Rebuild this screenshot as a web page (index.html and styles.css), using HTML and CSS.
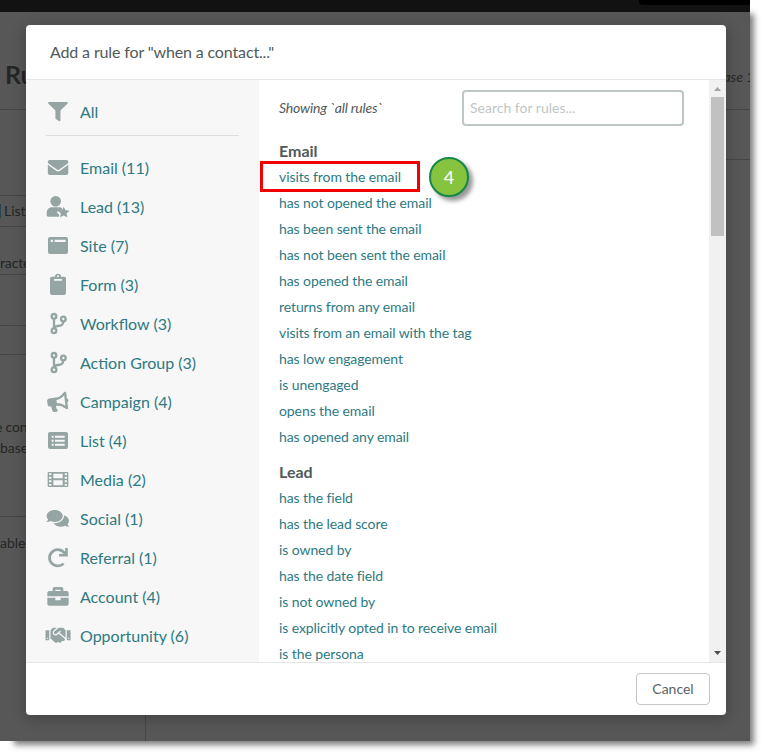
FILE: index.html
```html
<!DOCTYPE html>
<html lang="en">
<head>
<meta charset="utf-8">
<title>Add a rule</title>
<link rel="stylesheet" href="styles.css">
</head>
<body>
<div class="app">
  <div class="topbar"><div class="topbar-tab"></div></div>
  <div class="page">
    <div class="page-head"><h1>Rules</h1><span class="note">base 1</span></div>
    <div class="page-body">
      <div class="page-left">
        <div class="cell c1"></div>
        <div class="cell c2"><i class="tick"></i>List</div>
        <div class="cell c3">racters</div>
        <div class="cell c4"></div>
        <div class="cell c5"></div>
        <div class="cell c6"><div class="lead-line">e con</div><div>base</div></div>
        <div class="cell c7">able</div>
      </div>
      <div class="page-right"></div>
    </div>
    <div class="page-foot"></div>
  </div>
  <section class="modal">
    <header class="modal-head">Add a rule for "when a contact..."</header>
    <div class="modal-body">
      <nav class="side">
        <a class="item all"><svg viewBox="0 0 78 78"><path transform="translate(9 9) scale(.1165 .113)" d="M487.976 0H24.028C2.71 0-8.047 25.866 7.058 40.971L192 225.941V432c0 7.831 3.821 15.17 10.237 19.662l80 55.98C298.02 518.69 320 507.493 320 487.98V225.941l184.947-184.97C520.021 25.896 509.338 0 487.976 0z"/></svg>All</a>
        <a class="item"><svg viewBox="0 0 78 78"><path transform="translate(8.500 7.500) scale(.12 .117)" d="M502.300 190.800c3.900-3.100 9.700-.2 9.700 4.700V400c0 26.500-21.500 48-48 48H48c-26.500 0-48-21.500-48-48V195.600c0-5 5.700-7.800 9.700-4.700 22.400 17.400 52.100 39.500 154.100 113.600 21.100 15.400 56.700 47.800 92.200 47.600 35.700.3 72-32.800 92.300-47.600 102-74.100 131.600-96.300 154-113.700zM256 320c23.200.4 56.600-29.200 73.400-41.400 132.700-96.300 142.800-104.700 173.400-128.700 5.800-4.500 9.200-11.500 9.200-18.900v-19c0-26.500-21.500-48-48-48H48c-26.500 0-48 21.500-48 48v19c0 7.400 3.400 14.300 9.200 18.900 30.600 23.900 40.700 32.400 173.400 128.700 16.800 12.200 50.200 41.800 73.400 41.400z"/></svg>Email (11)</a>
        <a class="item"><svg viewBox="0 0 78 78"><circle cx="32" cy="22" r="16"/><path d="M21 40h22c4 0 7 2 9 5l-3 5-10 2c-4 1-3 4-1 6l5 5-1 5H10c-3 0-5-2-5-5v-6c0-10 7-17 16-17z"/><path d="m56 38 5.500 10.500 12 1.500-9 8.500 2.500 11.500-11-5.500-10.500 5.500 2-11.500-8.500-8.500 12-1.500z"/></svg>Lead (13)</a>
        <a class="item"><svg viewBox="0 0 78 78"><path fill-rule="evenodd" d="M15 12h48a6 6 0 0 1 6 6v39a6 6 0 0 1-6 6H15a6 6 0 0 1-6-6V18a6 6 0 0 1 6-6zm2 8v7h7v-7zm12 0v7h33v-7z"/></svg>Site (7)</a>
        <a class="item"><svg viewBox="0 0 78 78"><path fill-rule="evenodd" d="M21 14h9a9 9 0 0 1 18 0h9a6 6 0 0 1 6 6v43a6 6 0 0 1-6 6H21a6 6 0 0 1-6-6V20a6 6 0 0 1 6-6zm18-4a3 3 0 1 0 0 6 3 3 0 0 0 0-6zM27 21v5h24v-5z"/></svg>Form (3)</a>
        <a class="item"><svg viewBox="0 0 78 78"><g class="line"><circle cx="27" cy="16" r="7"/><circle cx="27" cy="59" r="7"/><circle cx="55" cy="24" r="7"/><path d="M27 23v29M55 31c0 12-7 13-17 14-6 1-9 2-11 5"/></g></svg>Workflow (3)</a>
        <a class="item"><svg viewBox="0 0 78 78"><g class="line"><circle cx="27" cy="16" r="7"/><circle cx="27" cy="59" r="7"/><circle cx="55" cy="24" r="7"/><path d="M27 23v29M55 31c0 12-7 13-17 14-6 1-9 2-11 5"/></g></svg>Action Group (3)</a>
        <a class="item"><svg viewBox="0 0 78 78"><path transform="rotate(-7 39 39) translate(7 11) scale(.11)" d="M576 240c0-23.630-12.950-44.040-32-55.120V32.010C544 23.260 537.020 0 512 0c-7.120 0-14.190 2.380-19.980 7.020l-85.030 68.030C364.280 109.190 310.660 128 256 128H64c-35.350 0-64 28.650-64 64v96c0 35.350 28.650 64 64 64h33.700c-1.390 10.480-2.180 21.140-2.180 32 0 39.770 9.260 77.350 25.560 110.940 5.190 10.690 16.520 17.060 28.400 17.060h74.280c26.050 0 41.690-29.840 25.900-50.560-16.400-21.520-26.150-48.360-26.150-77.440 0-11.110 1.620-21.790 4.410-32H256c54.660 0 108.280 18.810 150.980 52.950l85.030 68.030a32.023 32.023 0 0 0 19.980 7.020c24.920 0 32-22.780 32-32V295.130C563.050 284.040 576 263.630 576 240zm-96 141.420l-33.050-26.440C392.950 311.780 325.120 288 256 288v-96c69.120 0 136.950-23.780 190.950-66.980L480 98.580v282.840z"/></svg>Campaign (4)</a>
        <a class="item"><svg viewBox="0 0 78 78"><path fill-rule="evenodd" d="M15 12h48a6 6 0 0 1 6 6v39a6 6 0 0 1-6 6H15a6 6 0 0 1-6-6V18a6 6 0 0 1 6-6zm5 11v6h6v-6zm10 0v6h29v-6zM20 35v6h6v-6zm10 0v6h29v-6zM20 47v6h6v-6zm10 0v6h29v-6z"/></svg>List (4)</a>
        <a class="item"><svg viewBox="0 0 78 78"><path fill-rule="evenodd" d="M11 15h56a3 3 0 0 1 3 3v39a3 3 0 0 1-3 3H11a3 3 0 0 1-3-3V18a3 3 0 0 1 3-3zm1 4v5h7v-5zm0 10v6h7v-6zm0 11v6h7v-6zm0 11v5h7v-5zm47-32v5h7v-5zm0 10v6h7v-6zm0 11v6h7v-6zm0 11v5h7v-5zM25 20v14h28V20zm0 20v15h28V40z"/></svg>Media (2)</a>
        <a class="item"><svg viewBox="0 0 78 78"><path transform="translate(5 8.500) scale(.116 .112)" d="M416 192c0-88.400-93.100-160-208-160S0 103.600 0 192c0 34.300 14.100 65.900 38 92-13.400 30.200-35.500 54.200-35.800 54.500-2.200 2.300-2.800 5.700-1.500 8.700S4.800 352 8 352c36.600 0 66.900-12.300 88.700-25 32.200 15.700 70.300 25 111.300 25 114.900 0 208-71.600 208-160zm122 220c23.900-26 38-57.700 38-92 0-66.900-53.500-124.200-129.300-148.100.9 6.600 1.300 13.300 1.300 20.100 0 105.900-107.700 192-240 192-10.800 0-21.300-.8-31.700-1.900C207.800 439.600 281.800 480 368 480c41 0 79.100-9.200 111.300-25 21.800 12.700 52.100 25 88.700 25 3.200 0 6.100-1.900 7.300-4.800 1.300-2.900.7-6.300-1.500-8.700-.3-.3-22.400-24.200-35.800-54.500z"/></svg>Social (1)</a>
        <a class="item"><svg viewBox="0 0 78 78"><path transform="translate(8.500 9) scale(.117 .115)" d="M500.330 0h-47.410a12 12 0 0 0-12 12.570l4 82.760A247.420 247.420 0 0 0 256 8C119.340 8 7.900 119.530 8 256.190 8.100 393.070 119.100 504 256 504a247.100 247.100 0 0 0 166.180-63.910 12 12 0 0 0 .48-17.430l-34-34a12 12 0 0 0-16.380-.55A176 176 0 1 1 402.100 157.800l-101.530-4.870a12 12 0 0 0-12.570 12v47.410a12 12 0 0 0 12 12h200.330a12 12 0 0 0 12-12V12a12 12 0 0 0-12-12z"/></svg>Referral (1)</a>
        <a class="item"><svg viewBox="0 0 78 78"><path transform="translate(7 5) scale(.125)" d="M320 336c0 8.840-7.160 16-16 16h-96c-8.840 0-16-7.160-16-16v-48H0v144c0 25.600 22.400 48 48 48h416c25.600 0 48-22.400 48-48V288H320v48zm144-208h-80V80c0-25.600-22.400-48-48-48H176c-25.600 0-48 22.400-48 48v48H48c-25.600 0-48 22.400-48 48v80h512v-80c0-25.600-22.400-48-48-48zm-144 0H192V96h128v32z"/></svg>Account (4)</a>
        <a class="item"><svg viewBox="0 0 78 78"><path transform="translate(1.500 6.500) scale(.1175)" d="M434.700 64h-85.900c-8 0-15.700 3-21.600 8.400l-98.300 90c-.1.1-.2.3-.3.4-16.600 15.600-16.300 40.500-2.100 56 12.700 13.900 39.400 17.600 56.100 2.700.1-.1.3-.1.4-.2l79.900-73.200c6.500-5.900 16.700-5.500 22.600 1 6 6.500 5.500 16.600-1 22.600l-26.100 23.900L504 313.800c2.900 2.400 5.500 5 7.900 7.700V128l-54.600-54.600c-5.900-6-14.100-9.400-22.600-9.400zM544 128.200v223.900c0 17.700 14.300 32 32 32h64V128.200h-96zm48 223.900c-8.800 0-16-7.200-16-16s7.200-16 16-16 16 7.200 16 16-7.200 16-16 16zM0 384h64c17.700 0 32-14.300 32-32V128.200H0V384zm48-63.900c8.800 0 16 7.200 16 16s-7.200 16-16 16-16-7.200-16-16c0-8.900 7.200-16 16-16zm435.900 18.600L334.600 217.500l-30 27.500c-29.700 27.100-75.200 24.500-101.700-4.400-26.900-29.400-24.800-74.900 4.400-101.700L289.100 64h-83.800c-8.500 0-16.600 3.400-22.600 9.400L128 128v223.900h18.300l90.500 81.900c27.400 22.300 67.700 18.100 90-9.300l.2-.2 17.900 15.500c15.900 13 39.400 10.500 52.300-5.400l31.400-38.600 5.400 4.400c13.700 11.100 33.900 9.100 45-4.700l9.500-11.700c11.200-13.800 9.100-33.900-4.600-45.100z"/></svg>Opportunity (6)</a>
      </nav>
      <div class="rules">
        <div class="search-row"><em>Showing `all rules`</em><input class="search" type="text" placeholder="Search for rules..."></div>
        <h2>Email</h2>
        <a class="marked">visits from the email<span class="frame"></span><span class="badge">4</span></a>
        <a>has not opened the email</a>
        <a>has been sent the email</a>
        <a>has not been sent the email</a>
        <a>has opened the email</a>
        <a>returns from any email</a>
        <a>visits from an email with the tag</a>
        <a>has low engagement</a>
        <a>is unengaged</a>
        <a>opens the email</a>
        <a>has opened any email</a>
        <h2 class="second">Lead</h2>
        <a>has the field</a>
        <a>has the lead score</a>
        <a>is owned by</a>
        <a>has the date field</a>
        <a>is not owned by</a>
        <a>is explicitly opted in to receive email</a>
        <a>is the persona</a>
      </div>
      <div class="scroll">
        <svg viewBox="0 0 17 17"><path fill="#a3a3a3" d="M5 11h7L8.500 7z"/></svg>
        <div class="thumb"></div>
        <svg viewBox="0 0 17 17"><path fill="#505050" d="M5 6h7l-3.500 4z"/></svg>
      </div>
    </div>
    <footer class="modal-foot"><button>Cancel</button></footer>
  </section>
</div>
</body>
</html>
```

FILE: styles.css
```css
* { box-sizing: border-box; }
body { margin: 0; height: 756px; overflow: hidden; background: #fff; font-family: Lato, "Liberation Sans", sans-serif; font-size: 14px; color: #515959; }
.app { position: relative; width: 750px; height: 741px; background: #575757; }
.app::before { content: ""; position: absolute; z-index: -1; inset: 12px 0 0 12px; box-shadow: 3px 3px 6px 1px rgba(0,0,0,.5); }
.topbar { height: 12px; background: #121212; display: flex; justify-content: flex-end; }
.topbar-tab { width: 111px; height: 5px; background: #000; border-bottom-left-radius: 4px; }
.page { height: 729px; overflow: hidden; display: flex; flex-direction: column; color: #242626; }
.page-head { height: 98px; border-bottom: 1px solid #464646; display: flex; justify-content: space-between; padding: 48px 0 0 5px; }
.page-head h1 { margin: 0; font-size: 25px; line-height: 29px; }
.note { width: 37px; margin-top: 8px; font-style: italic; line-height: 17px; white-space: nowrap; text-indent: 3px; overflow: hidden; }
.page-body { height: 605px; display: flex; justify-content: space-between; line-height: 20px; }
.page-left { width: 145px; }
.page-right { width: 100px; height: 50px; border-bottom: 1px solid #464646; }
.page-foot { flex: 1; width: 146px; border-right: 1px solid #464646; }
.cell { border-bottom: 1px solid #464646; white-space: nowrap; }
.c1 { height: 86px; }
.c2 { height: 31px; padding: 5px 0 0 4px; display: flex; }
.tick { width: 1px; height: 14px; margin: 3px 3px 0 -4px; background: #29434f; }
.c3 { height: 48px; padding-top: 26px; letter-spacing: -.15px; }
.c4 { height: 51px; }
.c5 { height: 29px; }
.c6 { height: 162px; padding-top: 61px; line-height: 21px; }
.lead-line { margin-left: -5px; letter-spacing: -.2px; }
.c7 { height: 90px; padding-top: 16px; border: 0; }

.modal { position: absolute; left: 26px; top: 25px; width: 700px; height: 690px; display: flex; flex-direction: column; background: #fff; border-radius: 4px; box-shadow: 0 3px 14px rgba(0,0,0,.25); }
.modal-head { height: 55px; padding: 0 24px; border-bottom: 1px solid #e5e6e6; font-size: 16px; line-height: 54px; letter-spacing: -.14px; }
.modal-body { height: 582px; display: flex; overflow: hidden; }
.side { width: 233px; padding: 13px 20px; background: #f7f7f7; }
.item { display: flex; align-items: center; height: 39px; padding-bottom: 2px; gap: 9px; font-size: 16px; color: #2d7a82; margin-left: -1px; }
.item svg { width: 26px; height: 26px; margin-top: 1px; fill: #95a5a3; overflow: visible; }
.item.all { height: 43px; margin: 0 0 13px; padding-bottom: 6px; border-bottom: 1px solid #dcdede; gap: 8px; }
.item.all svg { margin: 2px 1px 0 -1px; }
.item .line { fill: none; stroke: #95a5a3; stroke-width: 7; }
.rules { width: 450px; padding: 10px 25px 0 20px; }
.search-row { display: flex; justify-content: space-between; align-items: center; }
.search-row em { padding-bottom: 2px; letter-spacing: -.2px; }
.search { width: 222px; height: 36px; padding: 0 6px 2px; border: 2px solid #bfc6c6; border-radius: 4px; font: 14px Lato, sans-serif; background: #fff; }
.search::placeholder { color: #bfc6c6; opacity: 1; }
h2 { margin: 15px 0 0; height: 23px; font-size: 16px; line-height: 20px; }
h2.second { margin-top: 12px; }
.rules a { display: block; position: relative; height: 26px; line-height: 26px; color: #2d7a82; white-space: nowrap; letter-spacing: -.09px; }
.frame { position: absolute; left: -19px; top: -3px; width: 160px; height: 31px; border: 3px solid #f30000; }
.badge { position: absolute; left: 150px; top: -7px; width: 40px; height: 40px; border: 2px solid #158849; border-radius: 50%; background: #86c440; color: #fff; font-size: 18px; line-height: 36px; text-align: center; box-shadow: 4px 4px 4px rgba(0,0,0,.4); }
.scroll { width: 17px; background: #f1f1f1; display: flex; flex-direction: column; align-items: center; }
.scroll svg { width: 17px; height: 17px; }
.thumb { width: 13px; height: 139px; margin-bottom: auto; background: #c1c1c1; }
.modal-foot { flex: 1; border-top: 1px solid #e5e6e6; padding: 10px 16px; display: flex; justify-content: flex-end; }
button { width: 74px; height: 32px; padding: 0 0 2px; border: 1px solid #c4c6c6; border-radius: 4px; background: #fff; color: #5b6262; font: 14px Lato, sans-serif; }
```
